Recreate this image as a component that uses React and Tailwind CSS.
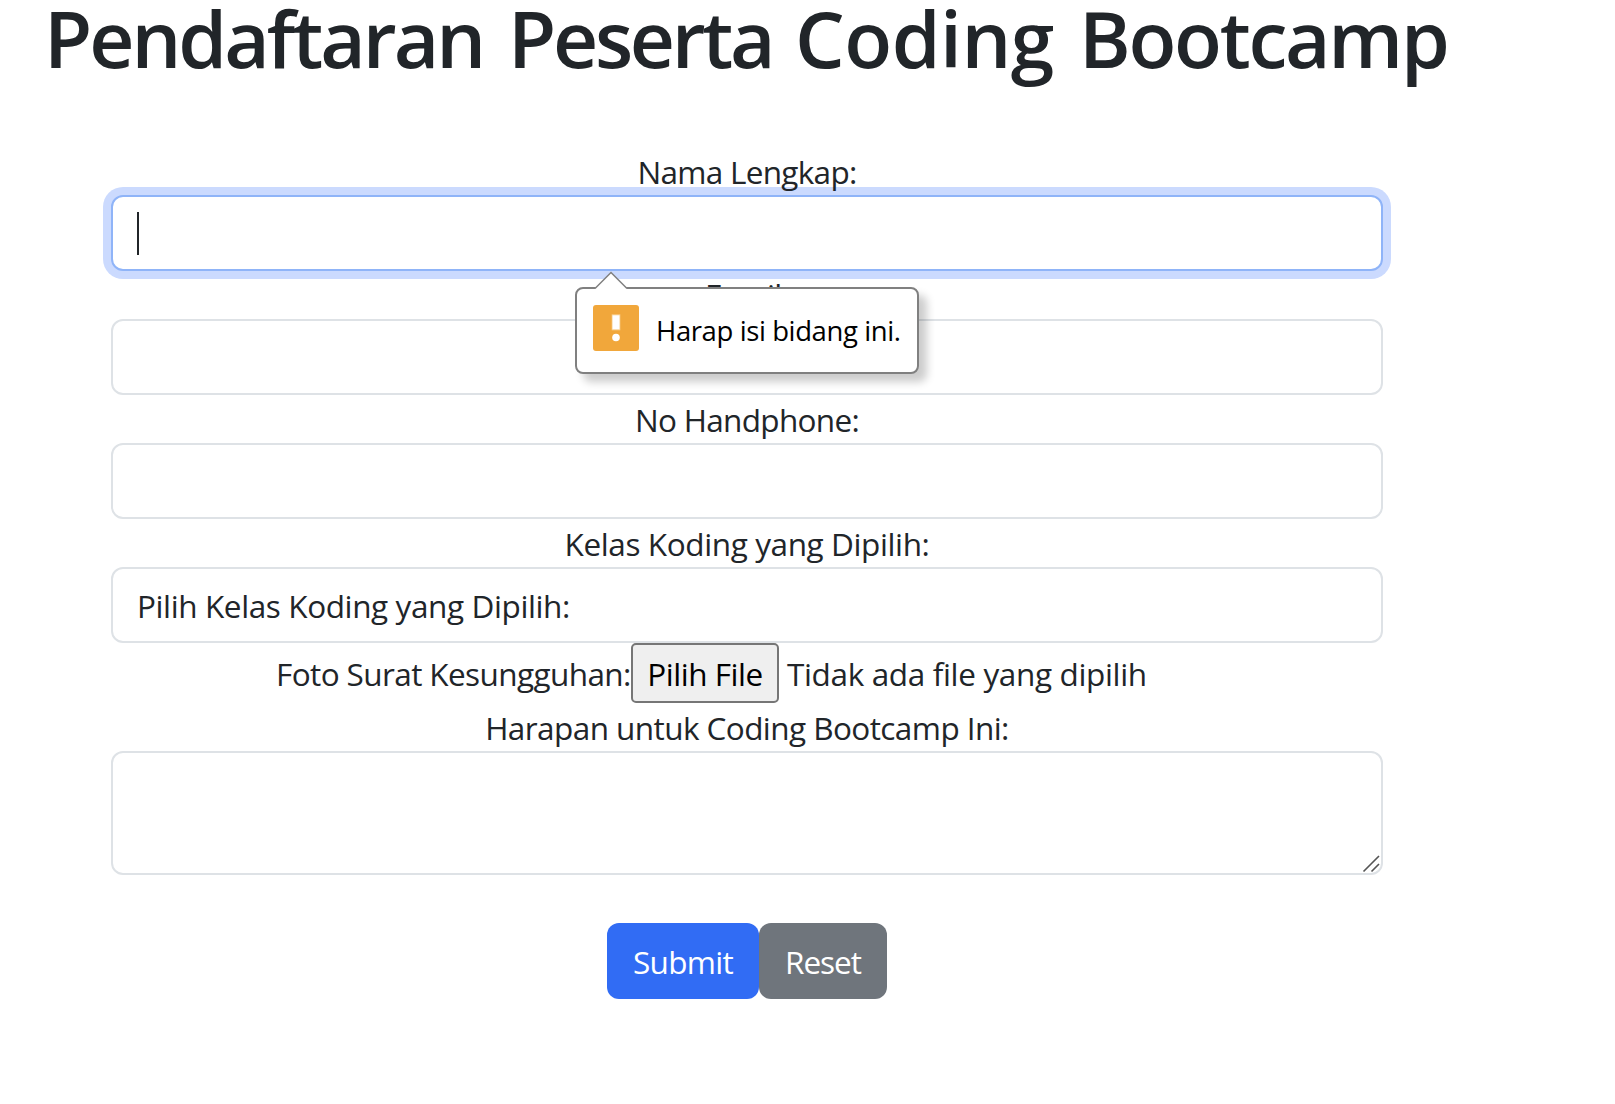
import React from "react";

const control =
  "block h-[76px] w-full rounded-[12px] border-2 border-[#dee2e6] bg-white px-6 outline-none";

function Label({ className = "leading-[50px]", children }) {
  return (
    <label className={`relative z-10 block h-12 whitespace-nowrap text-center ${className}`}>
      {children}
    </label>
  );
}

function ValidationBubble() {
  return (
    <div className="absolute left-[464px] top-[92px] z-20 flex h-[87px] w-[344px] items-start rounded-[8px] border-2 border-[#808080] bg-white pl-4 pt-4 shadow-[8px_8px_8px_rgba(0,0,0,0.2)]">
      <svg className="absolute left-[17px] -top-[18px]" width="34" height="19" viewBox="0 0 34 19">
        <path d="M1 17.5 17 1.5 33 17.5V19H1Z" fill="white" />
        <path d="M1 17.5 17 1.5 33 17.5" fill="none" stroke="#808080" strokeWidth="1.5" />
      </svg>
      <svg width="46" height="46" viewBox="0 0 46 46" className="shrink-0">
        <rect width="46" height="46" rx="3" fill="#f1a73b" />
        <path d="M18.7 9.3h8.6v16h-8.6Z" fill="#f8cf8f" />
        <path d="M19.5 10.3h7v14h-7Z" fill="white" />
        <circle cx="23" cy="32.5" r="3.8" fill="white" />
      </svg>
      <span className="ml-[17px] whitespace-nowrap text-[27.5px] leading-[52px] tracking-[-0.4px] text-black">
        Harap isi bidang ini.
      </span>
    </div>
  );
}

export default function App() {
  return (
    <main className="h-[1104px] w-full bg-white font-['Open_Sans',sans-serif] text-[31.5px] text-[#212529]">
      <h1 className="flex h-[147px] whitespace-pre pl-[44px] text-[78.5px] font-semibold leading-[76px]">
        <span className="w-[464px] shrink-0 tracking-[-3px]">Pendaftaran </span>
        <span className="w-[287px] shrink-0 tracking-[-3.3px]">Peserta </span>
        <span className="w-[284px] shrink-0 tracking-[-0.5px]">Coding </span>
        <span className="tracking-[-2.3px]">Bootcamp</span>
      </h1>
      <form className="ml-[111px] w-[1272px]">
        <Label className="leading-[50px] tracking-[-0.7px]">Nama Lengkap:</Label>
        <div className="relative">
          <div className="flex h-[76px] w-full items-start rounded-[12px] border-2 border-[#8fb4f8] bg-white pl-6 pt-[15px] shadow-[0_0_0_8px_#cbdafe]">
            <span className="h-[43px] w-0.5 bg-[#212529]" />
          </div>
          <ValidationBubble />
        </div>
        <Label className="leading-[48px] tracking-[-0.7px]">Email:</Label>
        <input className={control} readOnly />
        <Label className="leading-[50px] tracking-[-0.68px]">No Handphone:</Label>
        <input className={control} readOnly />
        <Label className="leading-[50px] tracking-[-0.39px]">Kelas Koding yang Dipilih:</Label>
        <div className={`${control} whitespace-nowrap leading-[74px] tracking-[-0.39px]`}>
          Pilih Kelas Koding yang Dipilih:
        </div>
        <div className="flex h-[60px] whitespace-nowrap pl-[165px] leading-[62px]">
          <label className="w-[355px] shrink-0 tracking-[-0.6px]">Foto Surat Kesungguhan:</label>
          <button
            type="button"
            className="h-[60px] w-[148px] rounded-[5px] border-2 border-[#767676] bg-[#efefef] text-center leading-[58px] tracking-[-0.441px] text-black"
          >
            Pilih File
          </button>
          <span className="ml-2 tracking-[-0.35px]">Tidak ada file yang dipilih</span>
        </div>
        <Label className="leading-[50px] tracking-[-0.57px]">Harapan untuk Coding Bootcamp Ini:</Label>
        <div className="relative h-[124px]">
          <textarea
            className="block h-[124px] w-full resize-none rounded-[12px] border-2 border-[#dee2e6] bg-white outline-none"
            readOnly
          />
          <svg
            className="absolute bottom-0.5 right-[3px]"
            width="18"
            height="18"
            viewBox="0 0 18 18"
            stroke="#555"
            strokeWidth="1.6"
          >
            <path d="M1.5 16.5 17 1M9.5 16.5 17 9" />
          </svg>
        </div>
        <div className="mt-12 flex justify-center text-white">
          <button
            type="button"
            className="h-[76px] w-[152px] rounded-[12px] bg-[#316cf4] pt-0.5 leading-[74px] tracking-[-0.7px]"
          >
            Submit
          </button>
          <button
            type="button"
            className="h-[76px] w-[128px] rounded-[12px] bg-[#6f757c] pt-0.5 leading-[74px] tracking-[-1px]"
          >
            Reset
          </button>
        </div>
      </form>
    </main>
  );
}
